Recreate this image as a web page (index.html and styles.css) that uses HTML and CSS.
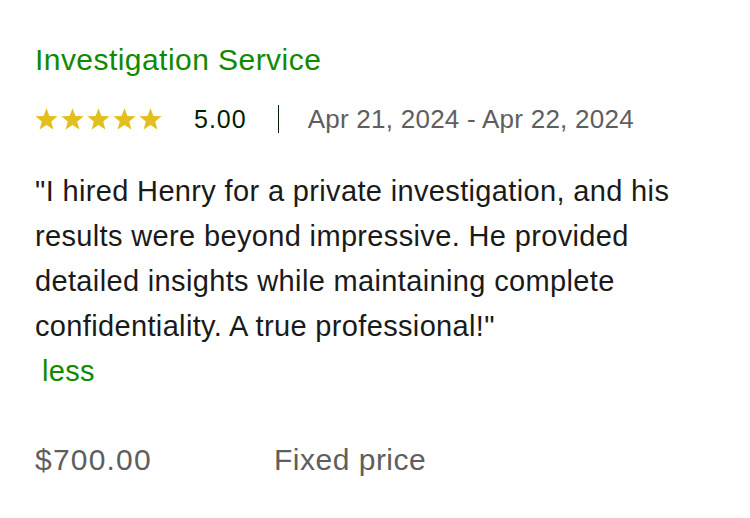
FILE: index.html
```html
<!DOCTYPE html>
<html>
<head>
<meta charset="utf-8">
<link rel="stylesheet" href="styles.css">
</head>
<body>
<div class="review">
  <h2 class="title">Investigation Service</h2>
  <div class="meta">
    <div class="stars">
      <svg viewBox="0 0 24 24" class="star"><polygon points="12,0.3 15.06,8.29 23.6,8.73 16.95,14.11 19.17,22.37 12,17.7 4.83,22.37 7.05,14.11 0.4,8.73 8.94,8.29"/></svg>
      <svg viewBox="0 0 24 24" class="star"><polygon points="12,0.3 15.06,8.29 23.6,8.73 16.95,14.11 19.17,22.37 12,17.7 4.83,22.37 7.05,14.11 0.4,8.73 8.94,8.29"/></svg>
      <svg viewBox="0 0 24 24" class="star"><polygon points="12,0.3 15.06,8.29 23.6,8.73 16.95,14.11 19.17,22.37 12,17.7 4.83,22.37 7.05,14.11 0.4,8.73 8.94,8.29"/></svg>
      <svg viewBox="0 0 24 24" class="star"><polygon points="12,0.3 15.06,8.29 23.6,8.73 16.95,14.11 19.17,22.37 12,17.7 4.83,22.37 7.05,14.11 0.4,8.73 8.94,8.29"/></svg>
      <svg viewBox="0 0 24 24" class="star"><polygon points="12,0.3 15.06,8.29 23.6,8.73 16.95,14.11 19.17,22.37 12,17.7 4.83,22.37 7.05,14.11 0.4,8.73 8.94,8.29"/></svg>
    </div>
    <span class="score">5.00</span>
    <span class="sep"></span>
    <span class="dates">Apr 21, 2024 - Apr 22, 2024</span>
  </div>
  <p class="text">"I hired Henry for a private investigation, and his results were beyond impressive. He provided detailed insights while maintaining complete confidentiality. A true professional!"<br><a class="less">less</a></p>
  <div class="price-row">
    <span class="price">$700.00</span>
    <span class="kind">Fixed price</span>
  </div>
</div>
</body>
</html>
```
FILE: styles.css
```css
html, body {
  margin: 0;
  padding: 0;
  background: #ffffff;
}
body {
  font-family: "Liberation Sans", Arial, sans-serif;
  color: #001e00;
}
.review {
  padding: 42px 0 0 35px;
  width: 680px;
}
.title {
  margin: 0;
  font-size: 30px;
  letter-spacing: 0.45px;
  font-weight: 400;
  color: #108a00;
  line-height: 36px;
}
.meta {
  display: flex;
  align-items: center;
  margin-top: 26px;
  height: 30px;
}
.stars {
  display: flex;
  gap: 3px;
}
.star {
  width: 23px;
  height: 23px;
  fill: #e2bf1f;
}
.score {
  margin-left: 32px;
  font-size: 25px;
  letter-spacing: 1px;
  color: #001e00;
}
.sep {
  width: 1px;
  height: 28px;
  background: #001e00;
  margin: 0 29px 0 31px;
}
.dates {
  font-size: 26px;
  letter-spacing: 0.25px;
  color: #5e5e5e;
}
.text {
  margin: 35px 0 0 0;
  font-size: 29px;
  letter-spacing: 0.35px;
  line-height: 45px;
  color: #1a1a1a;
}
.less {
  margin-left: 7px;
  color: #108a00;
  cursor: pointer;
}
.price-row {
  display: flex;
  margin-top: 48px;
  font-size: 30px;
  letter-spacing: 0.5px;
  line-height: 36px;
  color: #5e5e5e;
}
.price {
  width: 239px;
  letter-spacing: 1.2px;
}
```
